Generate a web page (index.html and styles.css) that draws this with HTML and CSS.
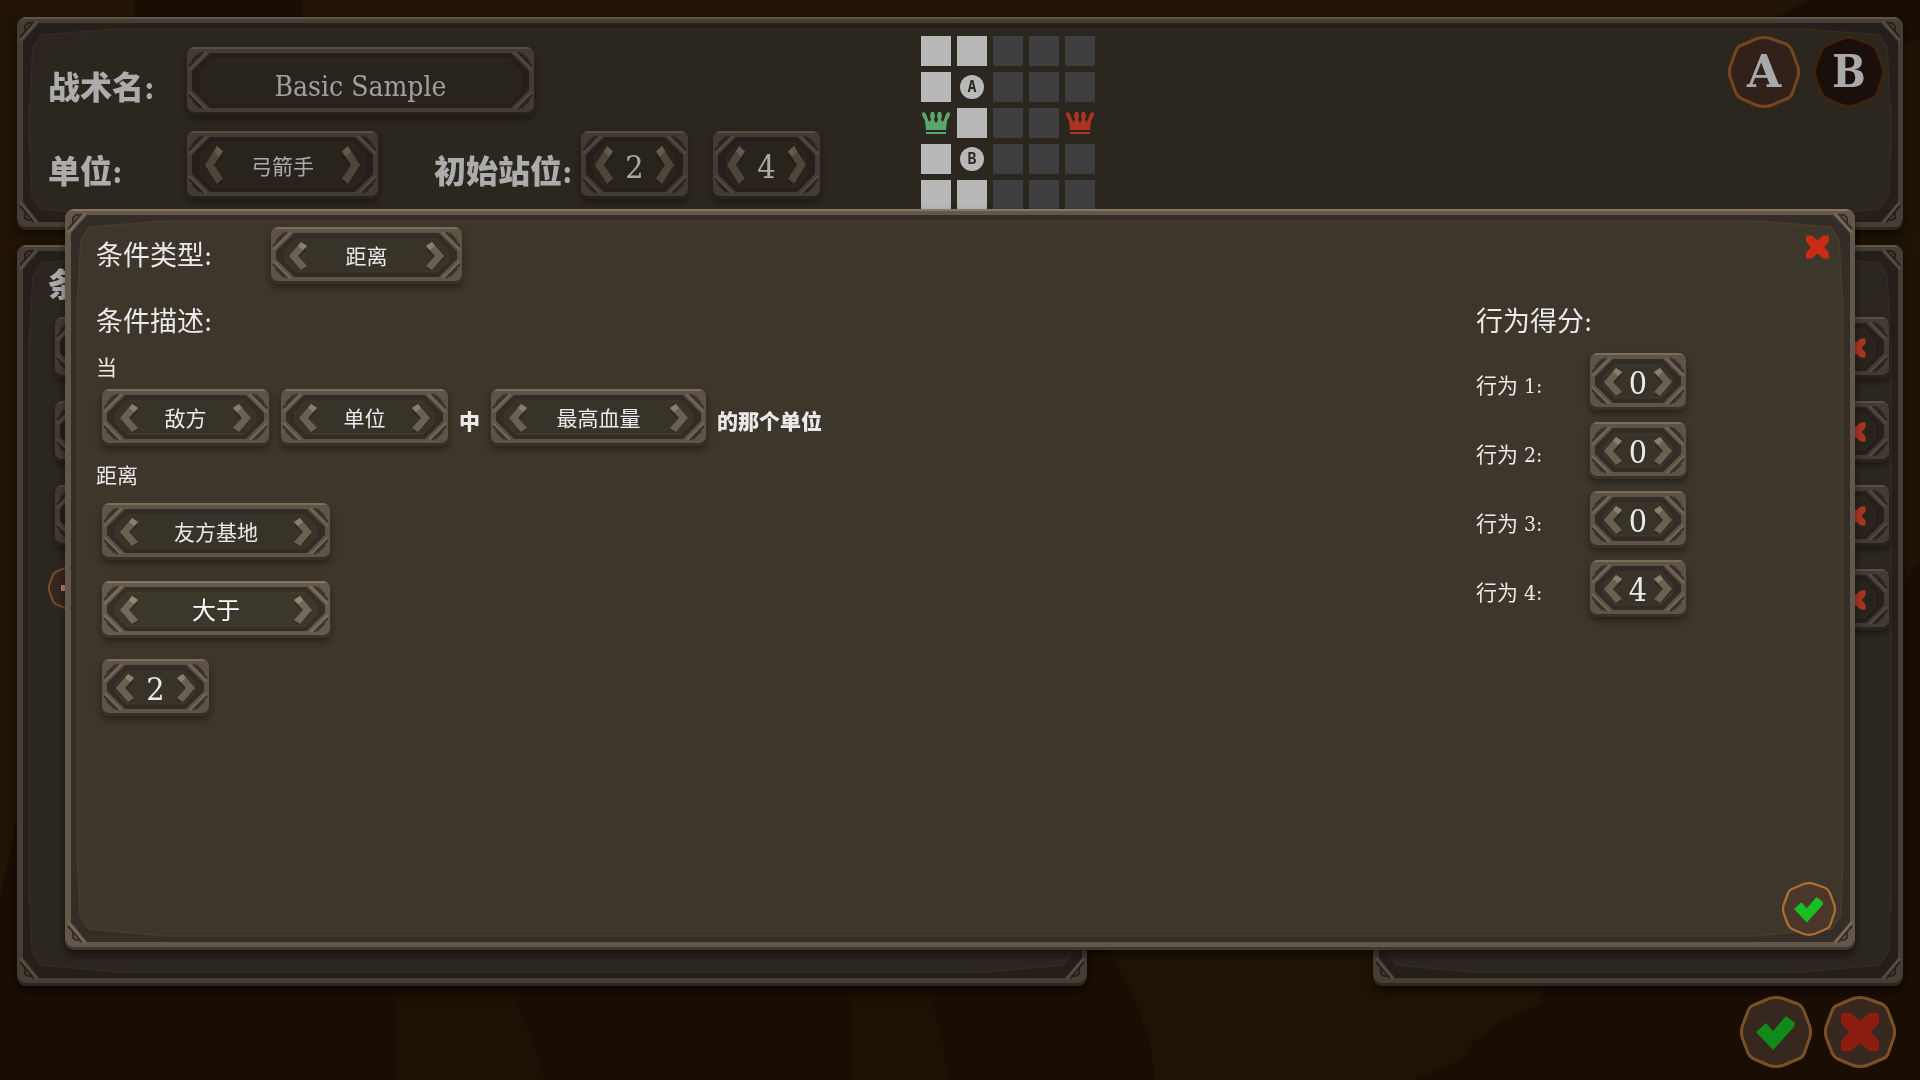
FILE: index.html
```html
<!DOCTYPE html>
<html lang="zh-CN">
<head>
<meta charset="utf-8">
<meta name="viewport" content="width=device-width, initial-scale=1">
<title>战术编辑</title>
<link rel="stylesheet" href="styles.css">
</head>
<body>
<svg class="defs" width="0" height="0" aria-hidden="true">
  <symbol id="prev" viewBox="0 0 18 28" preserveAspectRatio="none">
    <path d="M12 3 18 8 9 16 18 26 13 29 2 17z" fill="#2a241c" opacity=".6"/>
    <path d="M12 0 18 4 9 14 18 24 12 28 0 14z" fill="#6b6152"/>
    <path d="M12 0 18 4 14 8 9 4z" fill="#8a7e6d"/>
  </symbol>
  <symbol id="next" viewBox="0 0 18 28" preserveAspectRatio="none">
    <path d="M6 3 0 8 9 16 0 26 5 29 18 16z" fill="#2a241c" opacity=".6"/>
    <path d="M6 0 0 4 9 14 0 24 6 28 18 14z" fill="#6b6152"/>
    <path d="M6 0 0 4 4 8 9 4z" fill="#8a7e6d"/>
  </symbol>
  <symbol id="disc" viewBox="0 0 72 72">
    <path d="M28 3Q36 0 44 3L58 8Q62 10 64 15L70 31Q71 36 70 41L64 58Q62 62 58 63L44 69Q36 72 28 69L14 63Q10 61 8 57L2 41Q1 36 2 31L8 15Q10 10 14 9z" stroke-width="3" stroke-linejoin="round"/>
  </symbol>
  <symbol id="check" viewBox="0 0 72 72">
    <path d="M16 36 26 27 33 35 46 20 55 27 54 31 33 54z"/>
  </symbol>
  <symbol id="cross" viewBox="0 0 40 40">
    <path d="M1 1H11L20 9 29 1H39V11L31 20 39 29V39H29L20 31 11 39H1V29L9 20 1 11z"/>
  </symbol>
  <symbol id="crown" viewBox="0 0 28 22">
    <path d="M4 18 3 9 0 3V1L2 0 4 2 7 10 9 8 8 4 9 0H12L13 4 12 8 14 11 16 8 15 4 16 0H19L20 4 19 8 21 10 24 2 26 0 28 1V3L25 9 24 18zM4 20H24V22H4z"/>
  </symbol>
</svg>

<svg class="backdrop" viewBox="0 0 1920 1080" preserveAspectRatio="none" aria-hidden="true">
  <path d="M0 0H135V240L0 900zM302 0H955L940 300H300zM955 0H1810L1750 30 1700 240H955z" fill="#2e1c09"/>
  <path d="M1850 50 1920 40V560L1880 620z" fill="#2b1b08"/>
  <path d="M392 940H480Q520 990 545 1080H396zM850 960H912Q940 1000 948 1080H850z" fill="#271806"/>
  <path d="M1100 940H1560L1540 1005Q1480 1025 1460 1060L1412 1080H1155Q1150 1010 1100 940z" fill="#2b1b07"/>
</svg>

<main class="screen">
  <section class="panel setup">
    <form class="setup-form">
      <label class="title" for="tactic">战术名:</label>
      <input class="name" id="tactic" type="text" value="Basic Sample">
      <span class="title">单位:</span>
      <div class="units">
        <div class="stepper wide tall" role="group" aria-label="单位">
          <button type="button" aria-label="上一个"><svg><use href="#prev"/></svg></button>
          <output>弓箭手</output>
          <button type="button" aria-label="下一个"><svg><use href="#next"/></svg></button>
        </div>
        <span class="title place">初始站位:</span>
        <div class="stepper digit tall" role="group" aria-label="列">
          <button type="button" aria-label="减少"><svg><use href="#prev"/></svg></button>
          <output>2</output>
          <button type="button" aria-label="增加"><svg><use href="#next"/></svg></button>
        </div>
        <div class="stepper digit tall second" role="group" aria-label="行">
          <button type="button" aria-label="减少"><svg><use href="#prev"/></svg></button>
          <output>4</output>
          <button type="button" aria-label="增加"><svg><use href="#next"/></svg></button>
        </div>
      </div>
    </form>
    <div class="board">
      <i class="ours"></i><i class="ours"></i><i></i><i></i><i></i>
      <i class="ours"></i><b class="token">A</b><i></i><i></i><i></i>
      <svg class="crown green"><use href="#crown"/></svg><i class="ours"></i><i></i><i></i><svg class="crown red"><use href="#crown"/></svg>
      <i class="ours"></i><b class="token">B</b><i></i><i></i><i></i>
      <i class="ours"></i><i class="ours"></i><i></i><i></i><i></i>
    </div>
    <div class="tabs">
      <button class="round tab" type="button"><svg class="face"><use href="#disc"/></svg><span>A</span></button>
      <button class="round tab off" type="button"><svg class="face"><use href="#disc"/></svg><span>B</span></button>
    </div>
  </section>

  <div class="lists">
    <section class="panel rules">
      <h2 class="title">条</h2>
      <button class="slot" type="button" aria-label="条件 1"></button>
      <button class="slot" type="button" aria-label="条件 2"></button>
      <button class="slot" type="button" aria-label="条件 3"></button>
      <button class="round add" type="button" aria-label="添加"><svg class="face"><use href="#disc"/></svg><svg class="plus" viewBox="0 0 20 20"><path d="M1 7H7V1H13V7H19V13H13V19H7V13H1z"/></svg></button>
    </section>
    <section class="panel actions">
      <button class="slot" type="button" aria-label="删除行为 1"><svg><use href="#cross"/></svg></button>
      <button class="slot" type="button" aria-label="删除行为 2"><svg><use href="#cross"/></svg></button>
      <button class="slot" type="button" aria-label="删除行为 3"><svg><use href="#cross"/></svg></button>
      <button class="slot" type="button" aria-label="删除行为 4"><svg><use href="#cross"/></svg></button>
    </section>
  </div>

  <footer class="bar">
    <button class="round" type="button" aria-label="确定"><svg class="face"><use href="#disc"/></svg><svg class="mark yes"><use href="#check"/></svg></button>
    <button class="round" type="button" aria-label="取消"><svg class="face"><use href="#disc"/></svg><svg class="mark no"><use href="#cross"/></svg></button>
  </footer>
</main>

<div class="shade"></div>

<section class="panel modal" role="dialog" aria-label="条件类型">
  <header class="modal-head">
    <h2>条件类型:</h2>
    <div class="stepper wide" role="group" aria-label="条件类型">
      <button type="button" aria-label="上一个"><svg><use href="#prev"/></svg></button>
      <output>距离</output>
      <button type="button" aria-label="下一个"><svg><use href="#next"/></svg></button>
    </div>
    <button class="close" type="button" aria-label="关闭"><svg><use href="#cross"/></svg></button>
  </header>
  <div class="modal-body">
    <div class="describe">
      <h2>条件描述:</h2>
      <p class="when">当</p>
      <div class="clause">
        <div class="stepper mid" role="group" aria-label="阵营">
          <button type="button" aria-label="上一个"><svg><use href="#prev"/></svg></button>
          <output>敌方</output>
          <button type="button" aria-label="下一个"><svg><use href="#next"/></svg></button>
        </div>
        <div class="stepper mid" role="group" aria-label="对象">
          <button type="button" aria-label="上一个"><svg><use href="#prev"/></svg></button>
          <output>单位</output>
          <button type="button" aria-label="下一个"><svg><use href="#next"/></svg></button>
        </div>
        <strong>中</strong>
        <div class="stepper long" role="group" aria-label="属性">
          <button type="button" aria-label="上一个"><svg><use href="#prev"/></svg></button>
          <output>最高血量</output>
          <button type="button" aria-label="下一个"><svg><use href="#next"/></svg></button>
        </div>
        <strong>的那个单位</strong>
      </div>
      <p class="dist">距离</p>
      <div class="stack">
        <div class="stepper full" role="group" aria-label="目标">
          <button type="button" aria-label="上一个"><svg><use href="#prev"/></svg></button>
          <output>友方基地</output>
          <button type="button" aria-label="下一个"><svg><use href="#next"/></svg></button>
        </div>
        <div class="stepper full active" role="group" aria-label="比较">
          <button type="button" aria-label="上一个"><svg><use href="#prev"/></svg></button>
          <output>大于</output>
          <button type="button" aria-label="下一个"><svg><use href="#next"/></svg></button>
        </div>
        <div class="stepper digit" role="group" aria-label="距离值">
          <button type="button" aria-label="减少"><svg><use href="#prev"/></svg></button>
          <output>2</output>
          <button type="button" aria-label="增加"><svg><use href="#next"/></svg></button>
        </div>
      </div>
    </div>
    <div class="scores">
      <h2>行为得分:</h2>
      <div class="score"><span>行为 1:</span>
        <div class="stepper digit small" role="group" aria-label="行为 1">
          <button type="button" aria-label="减少"><svg><use href="#prev"/></svg></button>
          <output>0</output>
          <button type="button" aria-label="增加"><svg><use href="#next"/></svg></button>
        </div></div>
      <div class="score"><span>行为 2:</span>
        <div class="stepper digit small" role="group" aria-label="行为 2">
          <button type="button" aria-label="减少"><svg><use href="#prev"/></svg></button>
          <output>0</output>
          <button type="button" aria-label="增加"><svg><use href="#next"/></svg></button>
        </div></div>
      <div class="score"><span>行为 3:</span>
        <div class="stepper digit small" role="group" aria-label="行为 3">
          <button type="button" aria-label="减少"><svg><use href="#prev"/></svg></button>
          <output>0</output>
          <button type="button" aria-label="增加"><svg><use href="#next"/></svg></button>
        </div></div>
      <div class="score"><span>行为 4:</span>
        <div class="stepper digit small" role="group" aria-label="行为 4">
          <button type="button" aria-label="减少"><svg><use href="#prev"/></svg></button>
          <output>4</output>
          <button type="button" aria-label="增加"><svg><use href="#next"/></svg></button>
        </div></div>
    </div>
  </div>
  <footer class="modal-foot">
    <button class="round confirm" type="button" aria-label="确定"><svg class="face"><use href="#disc"/></svg><svg class="mark yes"><use href="#check"/></svg></button>
  </footer>
</section>
</body>
</html>
```
FILE: styles.css
```css
:root {
  --slab: "DejaVu Serif Condensed", "DejaVu Serif", "Noto Sans CJK SC", serif;
  --ink: #ebe9ec;
  /* stone frames, stretched as nine-slice images */
  --panel-frame: url("data:image/svg+xml,%3Csvg xmlns='http://www.w3.org/2000/svg' width='240' height='240'%3E%3Crect width='240' height='240' rx='9' fill='%233e372c'/%3E%3Crect width='240' height='237' rx='9' fill='%2362574a'/%3E%3Cpath d='M8 0H232L236 2H4z' fill='%23857761'/%3E%3Cpath d='M22 6H218L235 24V212L218 232H22L6 212V24z' fill='%23342c26'/%3E%3Cpath d='M100 12H140L216 18 224 31 228 100V140L226 206 216 219 140 226H100L24 219 15 206 12 140V100L16 31 25 18z' fill='%233d362a' stroke='%23483d2a' stroke-width='1.5'/%3E%3Cg fill='none' stroke-width='2'%3E%3Cpath d='M3 20L17 5M8 15V9L11 6H15M237 20L223 5M232 15V9L229 6H225M3 216L17 232M8 221V228L11 230H15M237 216L223 232M232 221V228L229 230H225' stroke='%23362e26'/%3E%3Cpath d='M3 24L20 4M237 24L220 4M3 212L20 233M237 212L220 233' stroke='%23796b59'/%3E%3C/g%3E%3C/svg%3E");
  --key-frame: url("data:image/svg+xml,%3Csvg xmlns='http://www.w3.org/2000/svg' width='80' height='57'%3E%3Crect width='80' height='57' rx='8' fill='%23373025'/%3E%3Crect x='1' width='78' height='54' rx='7' fill='%235d5347'/%3E%3Cpath d='M7 0H73L76 2H4z' fill='%237a6d5b'/%3E%3Cpath d='M24 6H56L74 24V32L56 50H24L6 32V24z' fill='%23332b25'/%3E%3Cpath d='M26 12H54L65 24V34L54 45H26L15 34V24z' fill='%23383328' stroke='%23443a2a' stroke-width='1'/%3E%3Cg fill='none' stroke-width='2'%3E%3Cpath d='M3 19L17 5M6 14L14 6M77 19L63 5M74 14L66 6M3 37L17 51M6 42L14 50M77 37L63 51M74 42L66 50' stroke='%233a322a'/%3E%3Cpath d='M3 23L21 5M77 23L59 5M3 34L20 51M77 34L60 51' stroke='%23736656'/%3E%3C/g%3E%3C/svg%3E");
}

* { box-sizing: border-box; }

body {
  margin: 0;
  background: #251306;
  color: var(--ink);
  font: 21px/24px var(--slab);
}

h2, p { margin: 0; font-weight: 400; }

button, input {
  padding: 0;
  border: 0;
  background: none;
  color: inherit;
  font: inherit;
}

button { display: grid; place-items: center; cursor: pointer; }
button > * { grid-area: 1 / 1; }
svg { display: block; }
.defs { position: absolute; }

.backdrop, .shade {
  position: fixed;
  inset: 0;
  width: 100%;
  height: 100%;
}
.backdrop { z-index: -1; }
.shade { background: rgba(0, 0, 0, .28); }

.screen {
  display: flex;
  flex-direction: column;
  min-height: 100vh;
  padding: 17px 17px 12px;
}

.panel {
  border: 1px solid transparent;
  border-image: var(--panel-frame) 100 fill / 100px stretch;
  border-radius: 9px;
  box-shadow: 0 5px 10px rgba(0, 0, 0, .5);
}

.title {
  color: #f0eff0;
  font-size: 32px;
  font-weight: 900;
  line-height: 32px;
}

/* top panel */
.setup {
  display: flex;
  padding: 18px 17px 19px 30px;
}
.setup-form {
  display: grid;
  grid-template-columns: 138px auto;
  align-content: start;
  align-items: center;
  gap: 16px 0;
  width: 873px;
  padding-top: 11px;
}
.setup-form .title { padding-top: 14px; white-space: nowrap; }
.name {
  width: 349px;
  height: 68px;
  padding-top: 10px;
  border: 1px solid transparent;
  border-image: var(--key-frame) 26 fill / 26px stretch;
  border-radius: 8px;
  box-shadow: 0 4px 6px rgba(0, 0, 0, .35);
  color: #dedede;
  font-size: 28px;
  text-align: center;
}
.units { display: flex; align-items: center; }
.units .place { width: 146px; margin-left: 55px; }
.units .second { margin-left: 23px; }

.board {
  display: grid;
  grid-template-columns: repeat(5, 30px);
  grid-auto-rows: 30px;
  place-items: center;
  gap: 6px;
}
.board i { width: 30px; height: 30px; background: #58585a; }
.board .ours { background: #fff; }
.token {
  width: 24px;
  height: 24px;
  border-radius: 50%;
  background: #fff;
  color: #3d362a;
  font: 700 15px/24px "DejaVu Sans Mono", monospace;
  text-align: center;
}
.crown { width: 28px; height: 22px; }
.green { fill: #7fe696; }
.red { fill: #f0492f; }

.tabs { display: flex; align-items: start; gap: 13px; margin-left: auto; }

.round { width: 72px; height: 72px; }
.face { width: 100%; height: 100%; fill: #4b362b; stroke: #ad6f33; }
.tab { font: 700 44px/60px "DejaVu Serif", serif; }
.tab .face { fill: #452e25; stroke: #a2622a; }
.off .face { fill: #25160f; stroke: #553216; }
.off { font-family: "DejaVu Serif Condensed", "DejaVu Serif", serif; }
.mark.yes { width: 100%; height: 100%; fill: #18bf24; }
.mark.no { width: 40px; height: 40px; fill: #c32718; }

/* value steppers */
.stepper {
  display: flex;
  align-items: center;
  flex: none;
  height: 57px;
  padding: 0 18px;
  border: 1px solid transparent;
  border-image: var(--key-frame) 26 fill / 26px stretch;
  border-radius: 8px;
  box-shadow: 0 4px 6px rgba(0, 0, 0, .35);
}
.stepper output { flex: 1; padding-top: 3px; text-align: center; white-space: nowrap; }
.stepper button, .stepper svg { width: 18px; height: 28px; }
.tall button, .tall svg { height: 38px; }
.stepper.tall { height: 68px; }
.stepper.tall svg, .stepper.tall button { height: 38px; }
.wide { width: 193px; }
.mid { width: 169px; }
.long { width: 217px; }
.full { width: 230px; }
.digit { width: 109px; padding: 0 14px; }
.digit output { font-size: 32px; line-height: 32px; }
.small { width: 98px; }
.active { filter: brightness(1.08); }
.active output { font-size: 24px; }

/* lower panels */
.lists {
  display: grid;
  grid-template-columns: 1070fr 286fr 530fr;
  flex: 1;
  margin: 15px 0 10px;
}
.rules { padding: 23px 30px; }
.actions {
  grid-column: 3;
  display: flex;
  flex-direction: column;
  align-items: end;
  gap: 23px;
  padding: 71px 12px;
}
.slot {
  width: 68px;
  height: 61px;
  border: 1px solid transparent;
  border-image: var(--key-frame) 26 fill / 26px stretch;
  border-radius: 8px;
  box-shadow: 0 4px 6px rgba(0, 0, 0, .35);
}
.slot svg { width: 24px; height: 20px; fill: #f0492f; }
.rules .slot { width: 100%; margin: 0 6px 23px; }
.rules .slot:nth-of-type(3) { margin-bottom: 20px; }
.rules .title { margin-bottom: 16px; }
.add { width: 44px; height: 44px; }
.add .plus { width: 20px; height: 20px; fill: #f0b890; }

.bar { display: flex; justify-content: flex-end; gap: 12px; padding-right: 7px; }

/* condition dialog */
.modal {
  position: fixed;
  inset: 209px 65px 130px;
  display: flex;
  flex-direction: column;
  padding: 17px 18px 13px 30px;
}
.modal h2 { font-size: 27px; line-height: 36px; }
.modal-head { display: flex; align-items: center; }
.modal-head h2 { width: 174px; }
.close { align-self: start; margin: 8px 6px 0 auto; }
.close svg { width: 25px; height: 24px; fill: #c92b17; }
.modal-body {
  display: flex;
  justify-content: space-between;
  padding: 20px 149px 0 0;
}
.when { margin: 16px 0 9px; }
.clause { display: flex; align-items: center; gap: 10px; padding-left: 5px; }
.clause strong { padding-top: 8px; font-weight: 900; }
.dist { margin: 18px 0 15px; }
.stack { display: grid; gap: 21px; padding-left: 5px; }
.scores h2 { margin-bottom: 13px; }
.score { display: flex; align-items: center; margin-bottom: 12px; }
.score span { width: 113px; padding-top: 8px; }
.modal-foot { display: flex; justify-content: flex-end; margin-top: auto; }
.confirm { width: 54px; height: 54px; }
```
